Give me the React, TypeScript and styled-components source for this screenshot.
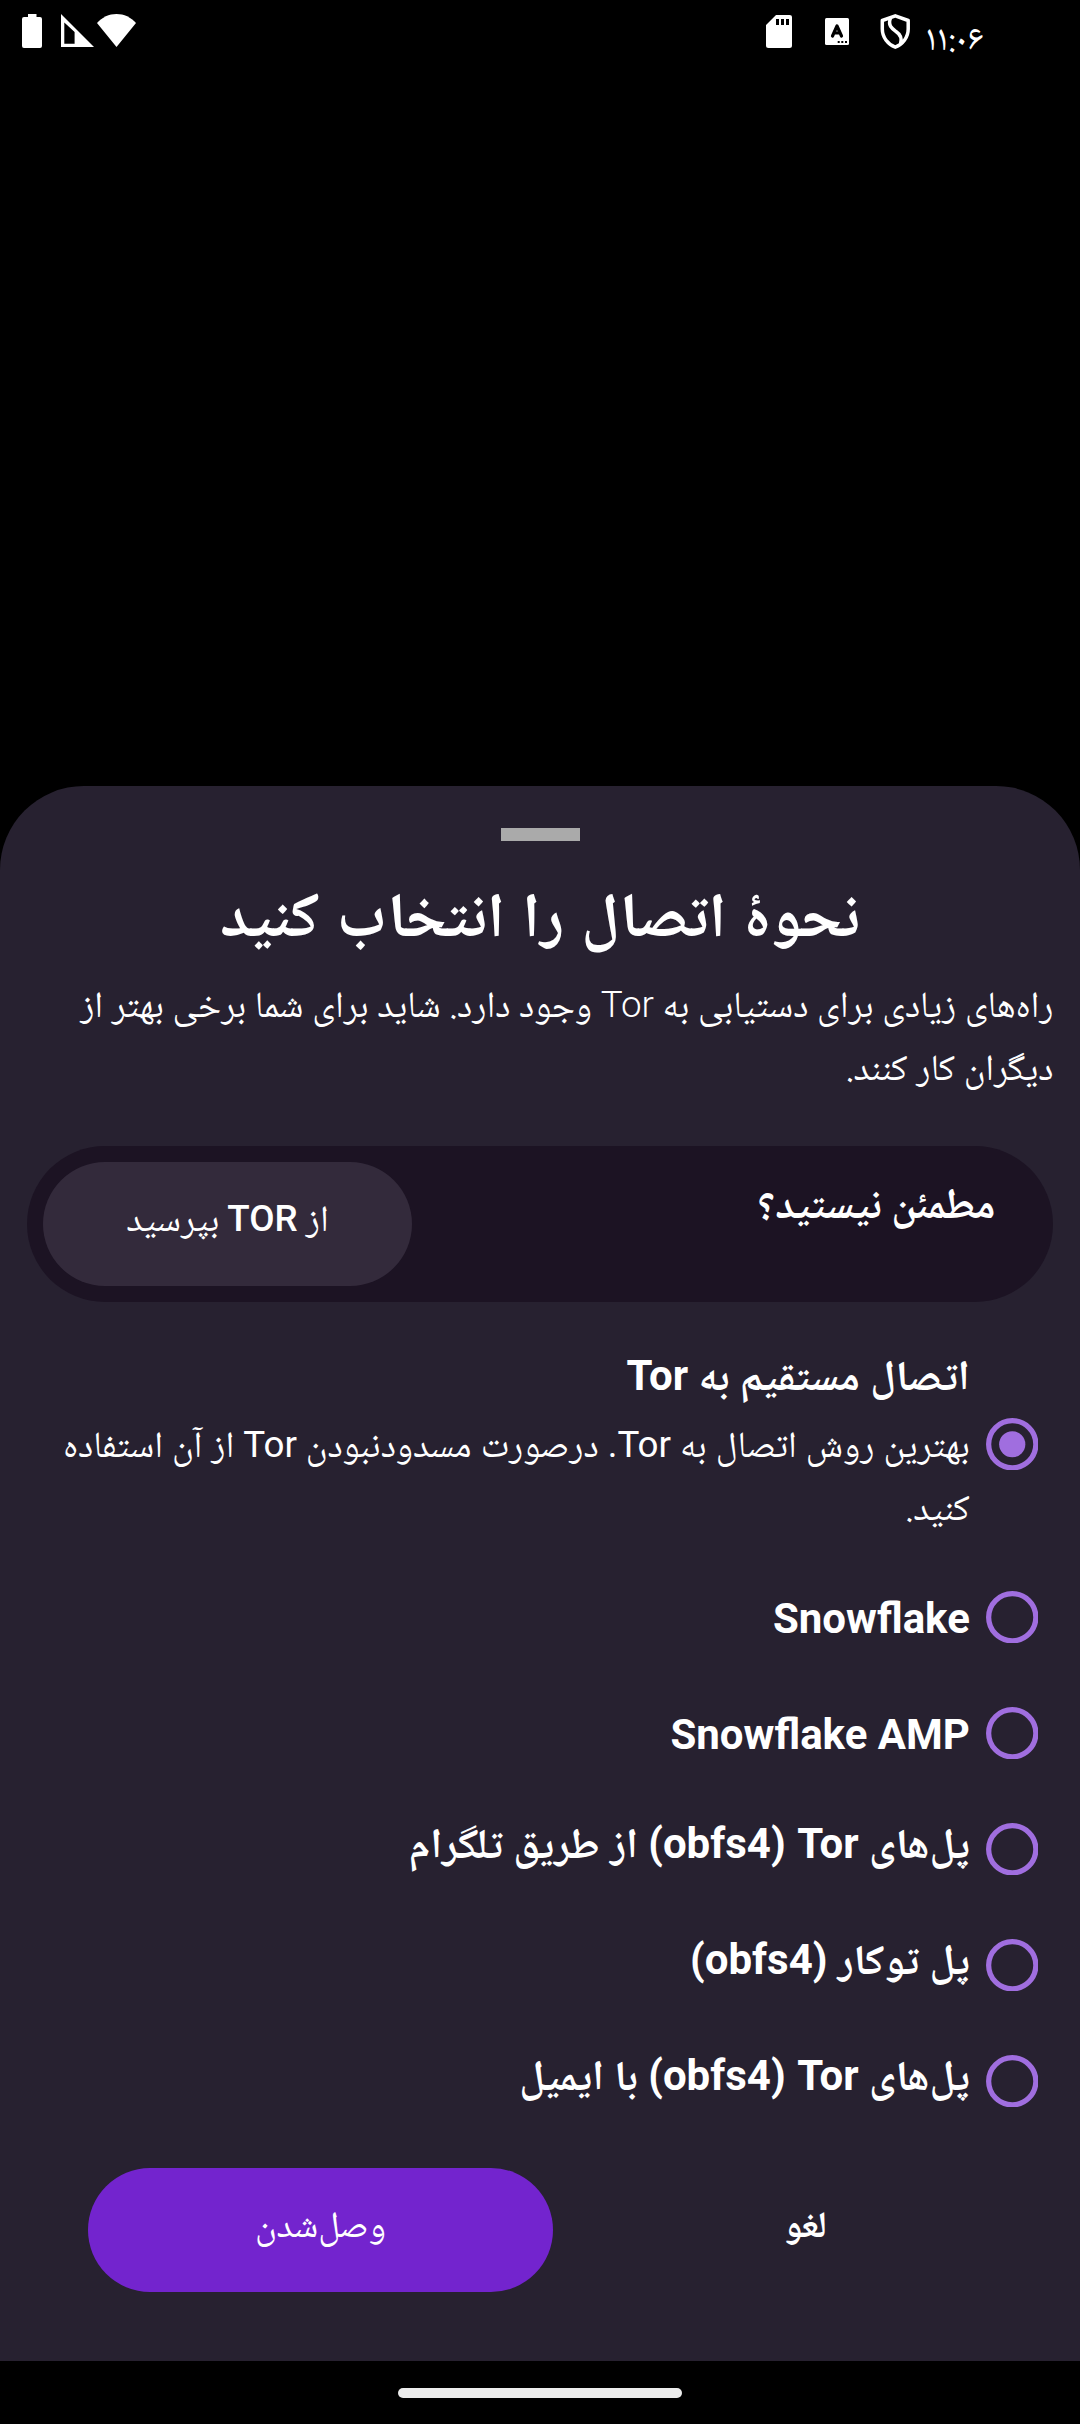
import React, { useState } from "react";
import styled, { createGlobalStyle } from "styled-components";

const naskh = `"Noto Naskh Arabic", "Noto Sans", Roboto, sans-serif`;
const naskhUI = `"Noto Naskh Arabic UI", ${naskh}`;
const roboto = `Roboto, "Noto Naskh Arabic", sans-serif`;

const GlobalStyle = createGlobalStyle`
  body { margin: 0; background: #000; }
  *, *::before, *::after { box-sizing: border-box; }
`;

const Screen = styled.div`
  width: 1080px;
  height: 2424px;
  display: flex;
  flex-direction: column;
  background: #000;
  color: #fff;
  font-family: ${naskh};
  overflow: hidden;
`;

const StatusBar = styled.header`
  height: 786px;
  flex: none;
  display: flex;
  direction: ltr;
  justify-content: space-between;
  align-items: flex-start;
  padding: 14px 97px 0 22px;
`;

const StatusGroup = styled.div`
  display: flex;
  align-items: flex-start;
`;

const StatusIcon = styled.svg<{ $gap?: number; $top?: number }>`
  display: block;
  margin-left: ${(p) => p.$gap ?? 0}px;
  margin-top: ${(p) => p.$top ?? 0}px;
`;

const Clock = styled.time`
  margin-left: 14px;
  width: 58px;
  font-family: ${naskhUI};
  font-size: 36.75px;
  line-height: 54px;
  white-space: nowrap;
`;

const Sheet = styled.main`
  height: 1575px;
  flex: none;
  display: flex;
  flex-direction: column;
  align-items: stretch;
  background: #272130;
  border-radius: 84px 84px 0 0;
  padding-top: 42px;
`;

const Handle = styled.div`
  width: 79px;
  height: 13px;
  align-self: center;
  background: #aaa;
`;

const Heading = styled.h1`
  margin: 26px 0 0;
  font-family: ${naskhUI};
  font-size: 63px;
  line-height: 107px;
  font-weight: 700;
  word-spacing: 3.4px;
  text-align: center;
`;

const Intro = styled.p`
  margin: 4px 26.500px 0;
  font-size: 36.75px;
  line-height: 63px;
  word-spacing: 0.55px;
`;

const Latin = styled.span<{ $weight?: number }>`
  font-family: ${roboto};
  font-weight: ${(p) => p.$weight ?? "inherit"};
  line-height: 0;
`;

const AskCard = styled.section`
  height: 156px;
  margin: 42px 27px 0;
  padding-top: 16px;
  padding-inline: 57.5px 16px;
  display: flex;
  justify-content: space-between;
  align-items: flex-start;
  background: #1c1323;
  border-radius: 78px;
`;

const AskTitle = styled.h2`
  margin: 11px 0 0;
  font-size: 42px;
  line-height: 72px;
  font-weight: 700;
`;

const Button = styled.button<{ $bg: string; $width: number; $bold?: boolean }>`
  width: ${(p) => p.$width}px;
  height: 124px;
  border: 0;
  border-radius: 62px;
  padding: 0 0 1px;
  background: ${(p) => p.$bg};
  color: #fff;
  font-family: ${naskh};
  font-size: 36.75px;
  line-height: 63px;
  font-weight: ${(p) => (p.$bold ? 700 : 400)};
`;

const Options = styled.div`
  margin-top: 27px;
  display: flex;
  flex-direction: column;
  padding-inline: 41.7px 27px;
`;

const Option = styled.div<{ $tall?: boolean }>`
  height: ${(p) => (p.$tall ? 230 : 116)}px;
  display: flex;
  align-items: center;
  gap: 16px;
  cursor: pointer;
`;

const RadioMark = styled.svg`
  display: block;
  flex: none;
`;

const OptionText = styled.div`
  flex: 1;
`;

const OptionTitle = styled.div<{ $latin?: boolean }>`
  padding-top: ${(p) => (p.$latin ? 3 : 0)}px;
  font-family: ${(p) => (p.$latin ? roboto : naskh)};
  font-size: 42px;
  line-height: 72px;
  font-weight: 700;
  word-spacing: ${(p) => (p.$latin ? 0 : 1)}px;
`;

const OptionNote = styled.div`
  padding-top: 1px;
  font-size: 36.75px;
  line-height: 63px;
  word-spacing: 0.9px;
`;

const Actions = styled.footer`
  margin-top: 29px;
  display: flex;
  justify-content: flex-end;
  align-items: center;
  gap: 20px;
  padding-inline: 0 88px;
`;

const NavBar = styled.nav`
  flex: 1;
  display: flex;
  justify-content: center;
  padding-top: 27px;
`;

const NavPill = styled.div`
  width: 284px;
  height: 10px;
  border-radius: 5px;
  background: #ececec;
`;

// The right-to-left mark keeps the bracketed part on the left of "Tor".
const TOR_OBFS4 = "Tor \u200f(obfs4)";

type Choice = { id: string; title: React.ReactNode; latin?: boolean; note?: React.ReactNode };

const choices: Choice[] = [
  {
    id: "direct",
    title: <>اتصال مستقیم به <Latin>Tor</Latin></>,
    note: (
      <>
        بهترین روش اتصال به <Latin>Tor.</Latin> درصورت مسدودنبودن <Latin>Tor</Latin> از آن استفاده کنید.
      </>
    ),
  },
  { id: "snowflake", title: "Snowflake", latin: true },
  { id: "amp", title: "Snowflake AMP", latin: true },
  { id: "telegram", title: <>پل‌های <Latin>{TOR_OBFS4}</Latin> از طریق تلگرام</> },
  { id: "builtin", title: <>پل توکار <Latin>(obfs4)</Latin></> },
  { id: "email", title: <>پل‌های <Latin>{TOR_OBFS4}</Latin> با ایمیل</> },
];

function Radio({ on }: { on: boolean }) {
  return (
    <RadioMark width="52.5" height="52.5" viewBox="0 0 52.5 52.5">
      <circle cx="26.25" cy="26.25" r="23.6" fill="none" stroke="#a06edf" strokeWidth="5.25" />
      {on && <circle cx="26.25" cy="26.25" r="13.1" fill="#a06edf" />}
    </RadioMark>
  );
}

function StatusIcons() {
  return (
    <StatusBar>
      <StatusGroup>
        <StatusIcon width="20" height="34" viewBox="0 0 20 34">
          <path fill="#fff" d="M6 0h8.5v3H18a2 2 0 0 1 2 2v27a2 2 0 0 1-2 2H2a2 2 0 0 1-2-2V5a2 2 0 0 1 2-2h4z" />
        </StatusIcon>
        <StatusIcon $gap={19} width="33" height="33" viewBox="0 0 33 33">
          <path fill="#fff" fillRule="evenodd" d="M0 0l33 33H0zM3.3 8.5V29.7H13.6V18z" />
        </StatusIcon>
        <StatusIcon $gap={3} width="39" height="33" viewBox="0 0 39 33">
          <path fill="#fff" d="M0 9C5 3.3 12 0 19.5 0S34 3.3 39 9L19.5 33z" />
        </StatusIcon>
      </StatusGroup>
      <StatusGroup>
        <StatusIcon $top={1} width="26" height="33" viewBox="0 0 26 33">
          <path fill="#fff" fillRule="evenodd" d="M10 0h13.5A2.5 2.5 0 0 1 26 2.5v28a2.5 2.5 0 0 1-2.500 2.500h-21A2.500 2.500 0 0 1 0 30.500V10zM10 4v6h3V4zM15 4v6h3V4zM20 4v6h3V4z" />
        </StatusIcon>
        <StatusIcon $gap={33} $top={4} width="24" height="27" viewBox="0 0 24 27">
          <rect width="24" height="27" rx="1.5" fill="#fff" />
          <path d="M7.500 18L12 8L16.500 18M9 15h6" fill="none" stroke="#000" strokeWidth="3.2" strokeLinecap="round" strokeLinejoin="round" />
          <path fill="#000" d="M12.700 23h2v2h-2zM16.300 23h2v2h-2zM20 23h2v2h-2z" />
        </StatusIcon>
        <StatusIcon $gap={31} width="31" height="35" viewBox="0 0 31 35">
          <g fill="none" stroke="#fff" strokeWidth="3.5">
            <path strokeLinejoin="round" d="M15.300 1.800L28.200 6.500V15C28.200 23.500 22.500 30.500 15.300 33.200C8 30.500 2.300 23.500 2.300 15V6.500z" />
            <path d="M10.500 4C7.500 12 12.500 15 16 17.500C20.500 20.500 22.500 24 20.500 30" />
          </g>
        </StatusIcon>
        <Clock>۱۱:۰۶</Clock>
      </StatusGroup>
    </StatusBar>
  );
}

export default function App() {
  const [selected, setSelected] = useState("direct");
  return (
    <Screen dir="rtl" lang="fa">
      <GlobalStyle />
      <StatusIcons />
      <Sheet>
        <Handle />
        <Heading>نحوهٔ اتصال را انتخاب کنید</Heading>
        <Intro>
          راه‌های زیادی برای دستیابی به <Latin $weight={300}>Tor</Latin> وجود دارد. شاید برای شما برخی بهتر از دیگران کار کنند.
        </Intro>
        <AskCard>
          <AskTitle>مطمئن نیستید؟</AskTitle>
          <Button $bg="#332a3b" $width={369}>
            از <Latin $weight={500}>TOR</Latin> بپرسید
          </Button>
        </AskCard>
        <Options role="radiogroup">
          {choices.map((c) => (
            <Option
              key={c.id}
              role="radio"
              aria-checked={selected === c.id}
              $tall={!!c.note}
              onClick={() => setSelected(c.id)}
            >
              <Radio on={selected === c.id} />
              <OptionText>
                <OptionTitle $latin={c.latin}>{c.title}</OptionTitle>
                {c.note && <OptionNote>{c.note}</OptionNote>}
              </OptionText>
            </Option>
          ))}
        </Options>
        <Actions>
          <Button $bg="transparent" $width={465} $bold>لغو</Button>
          <Button $bg="#7324ce" $width={465}>وصل‌شدن</Button>
        </Actions>
      </Sheet>
      <NavBar>
        <NavPill />
      </NavBar>
    </Screen>
  );
}
